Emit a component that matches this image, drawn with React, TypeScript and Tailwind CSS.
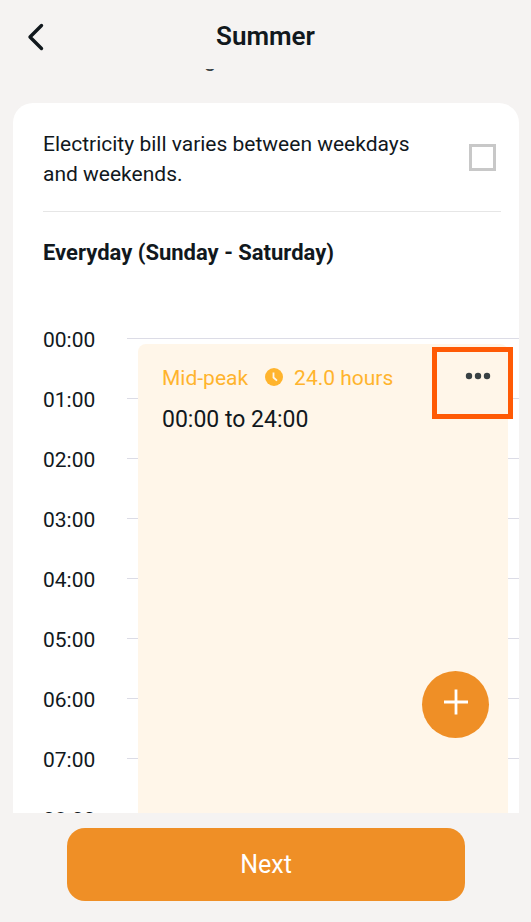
import { useState } from "react";

const hours = [
  "00:00",
  "01:00",
  "02:00",
  "03:00",
  "04:00",
  "05:00",
  "06:00",
  "07:00",
  "08:00",
];

function Header({ title }: { title: string }) {
  return (
    <header className="grid h-[69px] shrink-0 grid-cols-[48px_1fr_48px] items-center px-3 pb-1">
      <button
        type="button"
        aria-label="Back"
        className="flex h-12 w-12 items-center justify-center pt-2"
      >
        <svg width="20" height="30" viewBox="0 0 20 30" fill="none">
          <path
            d="M15.5 3.5 4 15l11.5 11.5"
            stroke="#11181d"
            strokeWidth="3.4"
            strokeLinecap="round"
            strokeLinejoin="round"
          />
        </svg>
      </button>
      <h1 className="pt-1.5 text-center text-[26px] leading-8 font-semibold">
        {title}
      </h1>
    </header>
  );
}

function PeriodCard() {
  return (
    <article className="absolute top-[6px] right-[11px] bottom-0 left-[11px] rounded-t-lg bg-[#fff6e9] px-6 pt-[18px]">
      <div className="flex items-center text-[21px] leading-8 text-[#ffb42d]">
        <span>Mid-peak</span>
        <svg
          className="mr-[10px] ml-4"
          width="20"
          height="20"
          viewBox="0 0 20 20"
          fill="none"
        >
          <circle cx="10" cy="9" r="9" fill="#ffb42d" />
          <path d="M9.5 4.5v5l3.5 3.2" stroke="#fff6e9" strokeWidth="1.8" />
        </svg>
        <span>24.0 hours</span>
      </div>
      <p className="mt-[10px] text-[23px] leading-8">00:00 to 24:00</p>

      <button
        type="button"
        aria-label="Edit period"
        className="absolute top-[3px] -right-[5px] flex h-[72px] w-[81px] justify-end border-[5px] border-[#ff5a05] pt-[20px] pr-[17px]"
      >
        <svg width="26" height="8" viewBox="0 0 26 8" fill="#394144">
          <circle cx="4" cy="4" r="3.2" />
          <circle cx="13" cy="4" r="3.2" />
          <circle cx="22" cy="4" r="3.2" />
        </svg>
      </button>
    </article>
  );
}

export default function App() {
  const [splitWeek, setSplitWeek] = useState(false);

  return (
    <div className="flex h-screen flex-col bg-[#f5f3f2] font-[Roboto,'Liberation_Sans',sans-serif] text-[#11181d]">
      <Header title="Summer" />

      <main className="relative min-h-0 flex-1 overflow-hidden px-3">
        {/* end of the intro line, scrolled under the header */}
        <div className="h-[34px] overflow-hidden pl-48">
          <p className="-mt-[22px] text-[22px] leading-6 text-[#394144]">g</p>
        </div>

        <section className="ml-px rounded-t-[20px] bg-white pt-[26px]">
          <div className="mr-[18px] ml-[30px] flex items-start justify-between border-b border-[#e6e6e6] pb-[22px]">
            <label
              htmlFor="split-week"
              className="max-w-[380px] text-[21px] leading-[30px]"
            >
              Electricity bill varies between weekdays and weekends.
            </label>
            <input
              id="split-week"
              type="checkbox"
              checked={splitWeek}
              onChange={(e) => setSplitWeek(e.target.checked)}
              className="mt-[15px] mr-[5px] h-[27px] w-[27px] shrink-0 appearance-none border-3 border-[#c8c8c8] bg-white checked:bg-[#ef8f26]"
            />
          </div>

          <h2 className="mt-[25px] ml-[30px] text-[22px] leading-8 font-bold">
            Everyday (Sunday - Saturday)
          </h2>

          <div className="mt-[55px] grid grid-cols-[84px_1fr] pl-[30px]">
            <ol className="text-[21px] leading-8">
              {hours.map((hour) => (
                <li key={hour} className="h-[60px]">
                  {hour}
                </li>
              ))}
            </ol>
            <div className="relative mt-[14px]">
              {hours.map((hour) => (
                <div key={hour} className="h-[60px] border-t border-[#dcdce6]" />
              ))}
              <PeriodCard />
            </div>
          </div>
        </section>

        <button
          type="button"
          aria-label="Add period"
          className="absolute right-[42px] bottom-[75px] flex h-[67px] w-[67px] items-center justify-center rounded-full bg-[#ef8f26] pb-[6px]"
        >
          <svg width="26" height="26" viewBox="0 0 26 26" fill="none">
            <path d="M13 .5v25M1 13h24" stroke="#fff" strokeWidth="2.8" />
          </svg>
        </button>
      </main>

      <footer className="shrink-0 pt-[15px] pr-[66px] pb-[21px] pl-[67px]">
        <button
          type="button"
          className="h-[73px] w-full rounded-[18px] bg-[#ef8f26] text-[25px] text-white"
        >
          Next
        </button>
      </footer>
    </div>
  );
}
